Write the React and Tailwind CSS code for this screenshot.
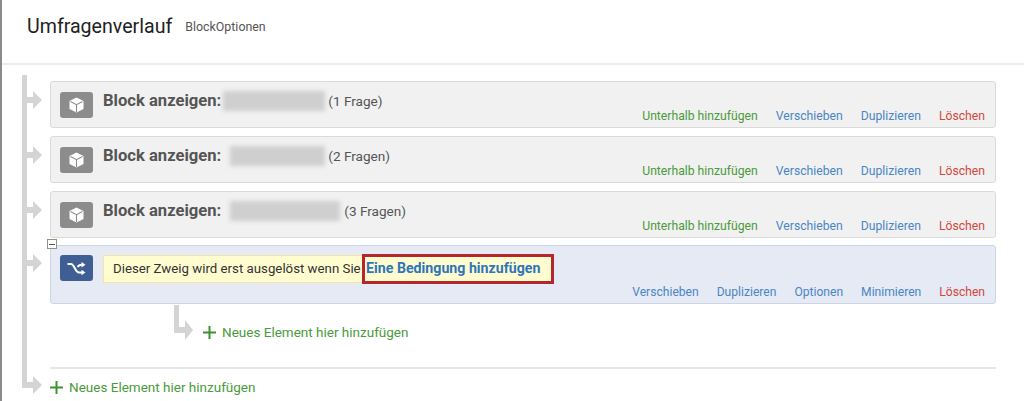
import React from "react";

function CubeIcon() {
  return (
    <div className="w-[33px] h-[26px] rounded-[3px] bg-[#8c8c8c] flex items-center justify-center shrink-0">
      <svg width="15" height="16" viewBox="0 0 15 16">
        <path d="M7.5 0.5 L14.5 4 V12 L7.5 15.5 L0.5 12 V4 Z" fill="#fff" />
        <path d="M1.5 4.5 L7.5 7.7 L13.5 4.5 M7.5 7.7 V15" fill="none" stroke="#8c8c8c" strokeWidth="1.1" />
      </svg>
    </div>
  );
}

function ShuffleIcon() {
  return (
    <div className="w-[33px] h-[26px] rounded-[3px] bg-[#3f5f94] flex items-center justify-center shrink-0">
      <svg width="19" height="13" viewBox="0 0 19 13">
        <path d="M0.5 2 H4 C7.5 2 8 10.5 12 10.5 H15" fill="none" stroke="#fff" strokeWidth="2" />
        <path d="M10.5 4.8 C11.5 3.5 12.5 2.7 15 2.7" fill="none" stroke="#fff" strokeWidth="2" />
        <path d="M14.5 0 L18.5 2.7 L14.5 5.4 Z M14.5 7.8 L18.5 10.5 L14.5 13.2 Z" fill="#fff" />
      </svg>
    </div>
  );
}

// flow arrows, coordinates are page x and page y minus the 65px header
function Connectors() {
  const arrow = (y) => `M27 ${y - 3} H33 V${y - 9} L42 ${y} L33 ${y + 9} V${y + 3} H27 Z`;
  return (
    <svg className="absolute -left-[2px] top-0" width="200" height="336" viewBox="0 0 200 336">
      <g fill="#d4d4d4">
        <rect x="22" y="10" width="5" height="313" />
        <path d={arrow(35)} />
        <path d={arrow(90)} />
        <path d={arrow(145)} />
        <path d={arrow(198)} />
        <path d={arrow(320)} />
        <path d="M174 240 H179 V262 H185 V255 L193 265 L185 275 V268 H174 Z" />
      </g>
    </svg>
  );
}

function BlockRow({ count, blurWidth, blurGap, gapAfter }) {
  return (
    <div className="h-[47px] rounded-[3px] border border-[#dadada] bg-[#f1f1f1] flex justify-between pl-[9px] pr-[10px]">
      <div className="flex items-start pt-[10px]">
        <CubeIcon />
        <div className="flex items-center ml-[10px] -mt-[2px] h-[22px]">
          <span className="text-[16.6px] font-bold text-[#555]">Block anzeigen:</span>
          <div className={`h-[20px] bg-[#cfcfcf] blur-[2px] ${blurGap} ${blurWidth}`} />
          <span className={`text-[13.6px] text-[#555] ${gapAfter}`}>{count}</span>
        </div>
      </div>
      <div className="flex items-end gap-[18px] pb-[2px] text-[12.2px]">
        <span className="text-[#4b9a3c]">Unterhalb hinzufügen</span>
        <span className="text-[#4a86c5]">Verschieben</span>
        <span className="text-[#4a86c5]">Duplizieren</span>
        <span className="text-[#d2483d]">Löschen</span>
      </div>
    </div>
  );
}

function AddElement({ className }) {
  return (
    <div className={`flex items-center gap-[6px] text-[13.5px] text-[#4b9a3c] ${className}`}>
      <svg width="13" height="13" viewBox="0 0 13 13">
        <path d="M6.5 0 V13 M0 6.5 H13" stroke="#3f9134" strokeWidth="2" />
      </svg>
      <span>Neues Element hier hinzufügen</span>
    </div>
  );
}

export default function App() {
  return (
    <div className="w-[1024px] h-[401px] overflow-hidden bg-white border-l-2 border-[#8a8a8a] font-['Roboto','Noto_Sans',sans-serif]">
      <header className="h-[65px] border-b-2 border-[#eeeeee] flex items-start pl-[25px] pt-[12px]">
        <h1 className="text-[19.6px] leading-[30px] text-[#222]">Umfragenverlauf</h1>
        <span className="ml-[13px] mt-[6px] text-[12.4px] text-[#555]">BlockOptionen</span>
      </header>

      <main className="relative pl-[48px] pr-[28px] pt-[16px]">
        <Connectors />
        <div className="relative flex flex-col gap-[8px]">
          <BlockRow count="(1 Frage)" blurGap="ml-[2px]" blurWidth="w-[102px]" gapAfter="ml-[3px]" />
          <BlockRow count="(2 Fragen)" blurGap="ml-[9px]" blurWidth="w-[95px]" gapAfter="ml-[3px]" />
          <BlockRow count="(3 Fragen)" blurGap="ml-[9px]" blurWidth="w-[110px]" gapAfter="ml-[4px]" />
          <div className="relative -mt-px h-[59px] rounded-[3px] border border-[#cdd5e4] bg-[#e5eaf4] flex justify-between pl-[9px] pr-[10px]">
            <div className="absolute -left-[4px] -top-[7px] w-[10px] h-[10px] border border-[#8f9680] bg-white flex items-center justify-center">
              <div className="w-[6px] h-px bg-[#555]" />
            </div>
            <div className="flex items-start pt-[9px]">
              <ShuffleIcon />
              <div className="flex items-stretch ml-[10px]">
                <div className="h-[28px] w-[259px] bg-[#fffdd0] border border-[#f6e3a8] border-r-0 pl-[9px] flex items-center text-[13.25px] text-[#333] whitespace-nowrap">
                  Dieser Zweig wird erst ausgelöst wenn Sie
                </div>
                <div className="-mt-px h-[30px] w-[192px] bg-[#fffdd0] border-[3px] border-[#b5272d] flex items-center pl-[1px] text-[14.2px] font-bold text-[#2f75bb] whitespace-nowrap">
                  Eine Bedingung hinzufügen
                </div>
              </div>
            </div>
            <div className="flex items-end gap-[18px] pb-[2px] text-[12.1px]">
              <span className="text-[#4a86c5]">Verschieben</span>
              <span className="text-[#4a86c5]">Duplizieren</span>
              <span className="text-[#4a86c5]">Optionen</span>
              <span className="text-[#4a86c5]">Minimieren</span>
              <span className="text-[#d2483d]">Löschen</span>
            </div>
          </div>
        </div>
        <AddElement className="relative ml-[153px] mt-[18px]" />
        <div className="mt-[25px] h-[2px] bg-[#e6e6e6]" />
        <AddElement className="relative mt-[8px]" />
      </main>
    </div>
  );
}
